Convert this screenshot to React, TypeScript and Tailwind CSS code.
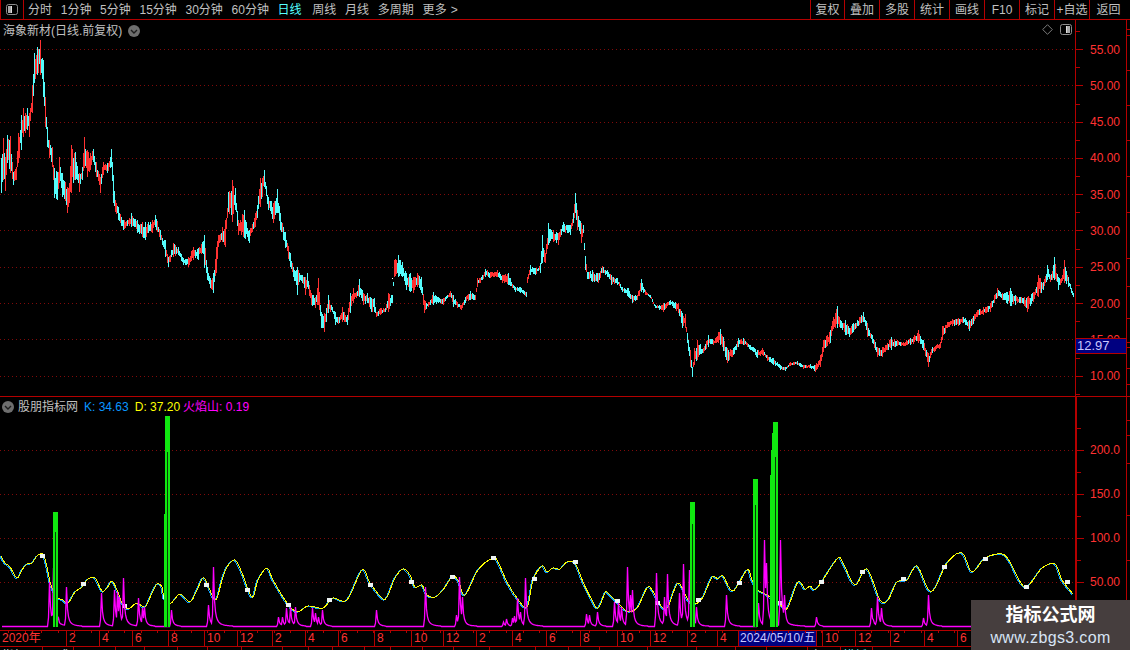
const TABS = ["分时", "1分钟", "5分钟", "15分钟", "30分钟", "60分钟", "日线", "周线", "月线", "多周期", "更多 >"];
const ACTIONS = ["复权", "叠加", "多股", "统计", "画线", "F10", "标记", "+自选", "返回"];
const PRICE_LABELS = ["55.00", "50.00", "45.00", "40.00", "35.00", "30.00", "25.00", "20.00", "15.00", "10.00"];
const PRICE_GRID = [49, 85, 122, 158, 194, 230, 267, 303, 339, 376];
const KD_LABELS = ["200.0", "150.0", "100.0", "50.00"];
const KD_GRID = [450, 494, 538, 582];

// x, high, low, traced off the picture in page pixels
const PRICE: [number, number, number][] = [
  [1,158,193],[3,138,180],[5,157,191],[7,135,163],[10,136,173],[13,172,185],[16,167,180],[18,133,163],[21,115,150],[23,108,137],
  [27,108,130],[29,113,137],[32,85,113],[34,53,83],[37,47,75],[40,40,75],[43,60,97],[45,97,127],[47,127,147],[49,140,158],
  [52,147,167],[54,168,198],[57,172,200],[59,157,183],[62,173,197],[67,187,213],[69,183,203],[71,145,193],[75,152,180],[79,173,192],
  [82,167,180],[84,137,168],[87,150,177],[90,153,170],[93,149,162],[96,162,177],[100,177,193],[103,162,175],[107,163,173],[111,149,167],
  [113,175,203],[115,200,212],[118,207,220],[123,220,230],[127,220,226],[131,213,227],[137,220,233],[142,222,237],[145,222,240],[148,222,233],
  [152,220,233],[155,215,227],[160,230,240],[165,240,257],[168,257,267],[173,243,257],[178,247,255],[183,258,265],[188,257,267],[193,247,260],
  [198,248,260],[202,242,253],[204,235,268],[207,267,280],[210,278,288],[213,273,293],[216,247,273],[218,235,247],[222,227,242],[225,220,247],
  [228,192,212],[232,180,222],[235,188,210],[238,220,235],[244,210,238],[249,230,243],[255,213,227],[260,178,207],[264,170,187],[268,197,210],
  [273,203,223],[277,189,213],[280,213,230],[285,232,248],[290,253,267],[293,267,277],[297,267,295],[299,273,282],[302,275,283],[305,277,295],
  [307,273,287],[311,293,305],[315,297,308],[318,278,305],[321,312,328],[324,313,332],[328,295,313],[332,307,312],[335,312,325],[338,317,324],
  [342,307,322],[347,315,325],[350,293,313],[353,288,303],[356,292,298],[359,279,297],[363,293,305],[367,293,303],[371,298,312],[374,298,312],
  [376,312,317],[380,308,315],[385,308,312],[388,293,312],[392,295,303],[394,260,277],[398,255,277],[402,262,277],[406,273,290],[410,273,292],
  [413,277,293],[417,273,287],[421,277,293],[424,300,313],[428,302,307],[433,292,305],[438,297,303],[443,298,305],[447,295,298],[450,291,297],
  [453,295,307],[457,302,308],[461,305,310],[465,297,303],[470,291,300],[475,295,300],[477,278,287],[482,275,280],[485,269,277],[490,272,278],
  [497,270,277],[502,275,283],[508,273,285],[515,287,292],[520,287,293],[526,292,297],[527,277,283],[530,265,275],[535,268,275],[540,263,273],
  [542,235,263],[545,253,263],[548,223,245],[553,230,242],[558,233,245],[563,222,232],[570,225,235],[573,213,223],[575,193,213],[577,210,230],
  [581,223,243],[583,225,233],[585,256,270],[587,272,279],[592,270,282],[598,273,283],[602,266,273],[607,270,277],[611,275,285],[617,278,285],
  [622,287,292],[628,288,297],[632,295,303],[637,295,300],[641,279,292],[645,290,295],[650,295,298],[655,305,308],[663,303,312],[670,300,305],
  [678,303,313],[682,313,328],[685,314,328],[687,333,343],[690,350,367],[692,367,377],[694,348,365],[697,340,360],[703,348,353],[708,335,347],
  [713,340,345],[720,329,345],[727,348,363],[732,350,357],[738,338,347],[743,338,345],[750,345,350],[757,350,358],[762,348,355],[767,355,361],
  [773,358,365],[780,365,370],[785,367,371],[790,362,366],[797,361,365],[803,365,369],[810,364,368],[815,365,372],[820,355,367],[823,340,352],
  [830,330,343],[833,317,329],[837,306,328],[840,320,328],[845,320,335],[849,328,337],[853,323,332],[859,317,325],[863,312,322],[867,323,337],
  [872,335,343],[877,347,357],[882,347,357],[887,343,350],[891,337,350],[897,340,346],[903,342,346],[910,338,345],[918,330,343],[923,340,350],
  [928,353,367],[932,347,353],[940,342,348],[942,326,340],[947,322,328],[952,319,326],[958,318,326],[963,317,323],[969,320,331],[977,310,317],
  [983,307,315],[990,303,312],[997,288,298],[1002,293,300],[1010,288,306],[1015,295,305],[1020,297,303],[1027,297,312],[1033,292,302],[1038,275,297],
  [1043,282,290],[1047,265,280],[1050,275,282],[1054,257,280],[1058,277,290],[1061,278,283],[1064,260,283],[1068,277,287],[1071,288,293],[1073,293,297],
];

const KD: [number, number][] = [
  [1,556],[5,563],[10,567],[17,578],[22,570],[27,564],[32,563],[37,556],[43,554],[47,567],[50,582],[53,590],[58,598],[63,600],[68,603],
  [75,592],[82,587],[88,579],[95,578],[102,591],[107,588],[112,581],[117,590],[122,603],[128,609],[137,603],[145,607],[152,593],[157,584],
  [162,587],[164,598],[171,603],[180,594],[190,602],[197,590],[204,578],[213,597],[217,598],[222,580],[227,567],[235,560],[242,573],[252,597],
  [258,580],[267,568],[273,580],[287,603],[297,612],[308,606],[323,608],[333,598],[347,600],[362,570],[370,583],[382,598],[387,597],[395,578],
  [403,569],[410,575],[415,587],[422,585],[427,595],[435,597],[443,590],[452,577],[458,580],[465,595],[478,570],[493,558],[498,562],[507,582],
  [517,598],[527,607],[533,580],[542,566],[547,572],[553,568],[560,569],[567,562],[575,563],[583,582],[592,600],[598,608],[605,593],[608,593],
  [617,602],[627,611],[637,608],[647,588],[652,590],[662,607],[668,607],[678,583],[688,600],[695,604],[703,597],[712,577],[718,579],[723,576],
  [733,591],[747,570],[752,580],[758,590],[767,595],[783,607],[788,607],[798,582],[805,589],[810,586],[817,588],[837,559],[843,563],[855,585],
  [867,569],[880,600],[888,600],[897,582],[907,580],[917,566],[928,589],[935,588],[947,563],[962,553],[972,572],[985,558],[1002,554],[1010,562],
  [1025,587],[1042,568],[1055,564],[1062,580],[1073,594],
];

const MARKS: [number, number][] = [
  [42,556],[83,584],[124,606],[165,597],[206,585],[247,590],[288,605],[329,600],[370,585],[411,582],[452,577],[493,558],[534,579],[575,562],
  [617,601],[657,603],[698,600],[739,583],[780,603],[821,582],[862,572],[903,579],[944,567],[985,559],[1026,587],[1067,582],
];

// x, top of each 火焰山 spike
const SPIKES: [number, number][] = [
  [49,582],[53,568],[58,618],[66,587],[101,593],[114,590],[117,592],[119,597],[123,578],[138,598],[142,608],[144,607],[171,610],[208,605],[213,567],
  [278,617],[282,617],[286,608],[290,607],[295,607],[312,608],[315,613],[318,617],[322,610],[376,610],[425,587],[456,615],[459,577],[462,597],
  [503,622],[506,619],[512,618],[514,616],[517,598],[520,612],[525,578],[586,614],[589,615],[597,612],[614,602],[618,603],[621,607],[627,567],[630,595],[632,590],
  [656,573],[664,597],[667,574],[679,593],[683,564],[689,570],[696,607],[726,595],[758,603],[764,540],[766,563],[780,540],[784,595],[816,617],
  [871,608],[873,620],[877,597],[881,608],[923,618],[928,595],
];

// x, width, top of the green columns
const VOLUME: [number, number, number][] = [
  [53,5,512],[164,1,514],[165,5,416],[690,5,502],[753,5,479],[770,1,475],[771,1,450],[772,1,433],[773,5,422],
];
const SLITS: [number, number][] = [[55,532],[167,452],[692,524],[755,505],[775,457]];

const AXIS_CELLS: [number, string][] = [
  [0,"2020年"],[66,"2"],[99,"4"],[132,"6"],[168,"8"],[204,"10"],[237,"12"],[272,"2"],[305,"4"],[338,"6"],[374,"8"],[411,"10"],[443,"12"],[476,"2"],
  [512,"4"],[546,"6"],[580,"8"],[617,"10"],[650,"12"],[687,"2"],[717,"4"],[738,"2024/05/10/五"],[816,""],[822,"10"],[855,"12"],[890,"2"],[924,"4"],[957,"6"],[1130,""],
];
const STRIP_CELLS: [number, string][] = [
  [0,"指标"],[42,"公式"],[73,""],[115,""],[144,""],[177,""],[207,""],[241,""],[282,""],[308,""],[332,""],[364,""],[390,""],[422,""],[453,""],[489,""],[535,""],
  [568,""],[599,""],[647,""],[696,""],[735,""],[766,""],[807,"窗口"],[840,"模板"],[872,""],[1130,""],
];

function buildCandles() {
  let seed = 11;
  const rnd = () => {
    seed = (seed * 16807) % 2147483647;
    return seed / 2147483647;
  };
  let red = "";
  let cyan = "";
  let i = 0;
  for (let x = 1; x <= 1073; x++) {
    while (i < PRICE.length - 2 && PRICE[i + 1][0] <= x) i++;
    const [x0, h0, l0] = PRICE[i];
    const [x1, h1, l1] = PRICE[i + 1];
    const t = (x - x0) / (x1 - x0);
    const hi = h0 + (h1 - h0) * t;
    const lo = l0 + (l1 - l0) * t;
    const exact = x === x0 || x === x1;
    const span = lo - hi;
    const top = Math.round(exact ? hi : hi + rnd() * span * 0.35);
    const bot = Math.round(exact ? lo : lo - rnd() * span * 0.35);
    const falling = h1 + l1 - h0 - l0 > 0;
    const seg = `M${x + 0.5} ${top}V${Math.max(bot, top + 2)}`;
    if (rnd() < (falling ? 0.72 : 0.3)) cyan += seg;
    else red += seg;
  }
  return { red, cyan };
}

function buildFlame() {
  let d = "M2 626.5";
  for (let x = 3; x <= 1073; x++) {
    let h = 0;
    for (const [sx, top] of SPIKES) {
      const dist = x - sx;
      const full = 626.5 - top;
      if (dist === -1) h = Math.max(h, full * 0.2);
      if (dist >= 0) h = Math.max(h, full / (1 + 0.5 * dist) ** 2);
    }
    d += `L${x + 0.5} ${(626.5 - (h < 0.5 ? 0 : h)).toFixed(1)}`;
  }
  return d;
}

// Catmull-Rom through the traced points, the line in the picture is a smooth one
function smoothLine(points: [number, number][], dx: number, dy: number) {
  let d = `M${points[0][0] + dx} ${points[0][1] + dy}`;
  for (let i = 0; i < points.length - 1; i++) {
    const p0 = points[Math.max(i - 1, 0)];
    const p1 = points[i];
    const p2 = points[i + 1];
    const p3 = points[Math.min(i + 2, points.length - 1)];
    const c1x = p1[0] + (p2[0] - p0[0]) / 6 + dx;
    const c1y = p1[1] + (p2[1] - p0[1]) / 6 + dy;
    const c2x = p2[0] - (p3[0] - p1[0]) / 6 + dx;
    const c2y = p2[1] - (p3[1] - p1[1]) / 6 + dy;
    d += `C${c1x.toFixed(1)} ${c1y.toFixed(1)} ${c2x.toFixed(1)} ${c2y.toFixed(1)} ${p2[0] + dx} ${p2[1] + dy}`;
  }
  return d;
}

const candles = buildCandles();
const flame = buildFlame();
const kdYellow = smoothLine(KD, 0, 0);
const kdBlue = smoothLine(KD, -1, 0.6);

function Grid({ rows }: { rows: number[] }) {
  return (
    <>
      {rows.map((y) => (
        <line key={y} x1="0" x2="1075" y1={y + 0.5} y2={y + 0.5} stroke="#800a0a" strokeDasharray="1 3" shapeRendering="auto" />
      ))}
    </>
  );
}

function RoundIcon() {
  return (
    <svg width="12" height="12" viewBox="0 0 12 12" className="shrink-0">
      <circle cx="6" cy="6" r="6" fill="#6e6e6e" />
      <path d="M3 5l3 3 3-3" fill="none" stroke="#1c1c1c" strokeWidth="1.4" />
    </svg>
  );
}

function PanelIcon({ side }: { side: "left" | "right" }) {
  return (
    <svg width="12" height="11" viewBox="0 0 12 11" className="shrink-0">
      <rect x="0.5" y="0.5" width="11" height="10" rx="2" fill="#000" stroke="#8c8c8c" />
      <rect x={side === "left" ? 2 : 7} y="2" width="3" height="7" fill="#a8a8a8" />
      <rect x={side === "left" ? 5 : 6} y="2" width="1" height="7" fill="#dcdcdc" />
    </svg>
  );
}

function AxisTicks({ rows, height, top }: { rows: number[]; height: number; top: number }) {
  const step = rows[1] - rows[0];
  const minors = rows.map((y) => y - step / 2);
  minors.push(rows[rows.length - 1] + step / 2);
  return (
    <svg className="absolute inset-0" width="51" height={height} viewBox={`1075 ${top} 51 ${height}`} shapeRendering="crispEdges">
      {rows.map((y) => (
        <line key={y} x1="1075" x2="1082" y1={y + 0.5} y2={y + 0.5} stroke="#b40000" />
      ))}
      {minors.map((y) => (
        <line key={y} x1="1075" x2="1079" y1={Math.round(y) + 0.5} y2={Math.round(y) + 0.5} stroke="#b40000" />
      ))}
    </svg>
  );
}

function Gutter({ ticks, height, top }: { ticks: number[]; height: number; top: number }) {
  return (
    <div className="w-[4px] shrink-0 border-l border-[#b40000]">
      <svg width="3" height={height} viewBox={`1127 ${top} 3 ${height}`} shapeRendering="crispEdges" className="block">
        {ticks.map((y) => (
          <line key={y} x1="1127" x2="1130" y1={y + 0.5} y2={y + 0.5} stroke="#b40000" />
        ))}
      </svg>
    </div>
  );
}

function Cells({ cells, labelled }: { cells: [number, string][]; labelled: (text: string) => string }) {
  return (
    <>
      {cells.slice(0, -1).map(([x, text], i) => (
        <div
          key={x}
          className={`shrink-0 overflow-hidden whitespace-nowrap pl-[2px] ${i > 0 ? "border-l border-[#b40000]" : ""} ${labelled(text)}`}
          style={{ width: cells[i + 1][0] - x }}
        >
          {text}
        </div>
      ))}
    </>
  );
}

export default function App() {
  return (
    <div className="flex h-[650px] w-[1130px] flex-col overflow-hidden bg-black text-[12px] relative text-[#c0c0c0] font-['Liberation_Sans','Noto_Sans_CJK_SC',sans-serif]">
      {/* toolbar */}
      <div className="flex h-[20px] shrink-0 items-center border-b border-[#b40000]">
        <div className="flex h-full w-[24px] shrink-0 items-center justify-center border-x border-[#b40000]">
          <PanelIcon side="left" />
        </div>
        <div className="flex items-center gap-[8.7px] pl-[4px]">
          {TABS.map((t) => (
            <span
              key={t}
              className={`whitespace-nowrap ${t === "日线" ? "text-[#55ffff]" : ""} ${t === "周线" ? "ml-[2px]" : ""} ${t === "更多 >" ? "tracking-[0.3px]" : ""}`}
            >
              {t}
            </span>
          ))}
        </div>
        <div className="ml-auto flex h-full pr-[3px]">
          {ACTIONS.map((a, i) => (
            <div
              key={a}
              className={`flex h-full items-center justify-center whitespace-nowrap border-l border-[#b40000] ${i === 0 ? "w-[34px]" : i === 8 ? "w-[38px]" : "w-[35px]"}`}
            >
              {a}
            </div>
          ))}
        </div>
      </div>

      {/* price pane */}
      <div className="flex h-[377px] shrink-0 border-b border-[#b40000]">
        <div className="relative w-[1075px] shrink-0">
          <svg width="1075" height="376" viewBox="0 20 1075 376" shapeRendering="crispEdges" className="block">
            <Grid rows={PRICE_GRID} />
            <path d={candles.red} stroke="#ff3232" fill="none" />
            <path d={candles.cyan} stroke="#54fcfc" fill="none" />
            <rect x="392" y="278" width="1" height="1" fill="#fff" />
            <rect x="584" y="249" width="1" height="1" fill="#fff" />
          </svg>
          <div className="absolute left-[3px] top-[2px] flex items-center gap-[6px]">
            <span className="whitespace-nowrap">海象新材(日线.前复权)</span>
            <RoundIcon />
          </div>
          <div className="absolute right-[3px] top-[4px] flex items-center gap-[7px]">
            <svg width="11" height="11" viewBox="0 0 11 11">
              <path d="M5.5 .7L10.3 5.5 5.5 10.3 .7 5.5z" fill="none" stroke="#7c7c7c" />
            </svg>
            <PanelIcon side="right" />
          </div>
        </div>
        <div className="relative w-[51px] shrink-0 border-l border-[#b40000] pt-[11.4px] text-[#ff3232]">
          <AxisTicks rows={PRICE_GRID} height={376} top={20} />
          {PRICE_LABELS.map((p) => (
            <div key={p} className="flex h-[36.3px] items-center pl-[14px]">
              {p}
            </div>
          ))}
          <div className="absolute inset-x-0 top-[318px] flex h-[16px] items-center border-y border-[#b40000] bg-[#000080] pl-[1px] text-[13px] text-[#c8c8ff]">
            12.97
          </div>
        </div>
        <Gutter ticks={[29, 35, 70, 105, 140, 176, 212, 258, 286, 318, 342, 347, 368, 384]} height={376} top={20} />
      </div>

      {/* indicator pane */}
      <div className="flex h-[233px] shrink-0">
        <div className="relative w-[1075px] shrink-0">
          <svg width="1075" height="233" viewBox="0 397 1075 233" shapeRendering="crispEdges" className="block">
            <Grid rows={KD_GRID} />
            <path d={kdBlue} fill="none" stroke="#0a9cf5" />
            <path d={kdYellow} fill="none" stroke="#ffff00" />
            {MARKS.map(([x, y]) => (
              <rect key={x} x={x - 2} y={y - 2} width="5" height="4" fill="#eef4f4" />
            ))}
            <path d={flame} fill="none" stroke="#ff00ff" strokeWidth="1.3" shapeRendering="auto" />
            {VOLUME.map(([x, w, top]) => (
              <rect key={x} x={x} y={top} width={w} height={627 - top} fill="#10e810" />
            ))}
            {SLITS.map(([x, top]) => (
              <rect key={x} x={x} y={top} width="1" height={627 - top} fill="#063a06" />
            ))}
          </svg>
          <div className="absolute left-[2px] top-[1px] flex items-center whitespace-nowrap">
            <RoundIcon />
            <span className="ml-[4px]">股朋指标网</span>
            <span className="ml-[6px] text-[#0a96ff]">K: 34.63</span>
            <span className="ml-[6px] text-[#ffff00]">D: 37.20</span>
            <span className="ml-[3px] text-[#ff00ff]">火焰山: 0.19</span>
          </div>
        </div>
        <div className="relative w-[51px] shrink-0 border-l-2 border-[#b40000] pt-[30.5px] text-[#ff3232]">
          <AxisTicks rows={KD_GRID} height={233} top={397} />
          {KD_LABELS.map((p) => (
            <div key={p} className="flex h-[44px] items-center pl-[13px]">
              {p}
            </div>
          ))}
        </div>
        <Gutter ticks={[420, 435, 463, 515, 560, 600]} height={233} top={397} />
      </div>

      {/* time axis */}
      <div className="relative flex h-[17px] shrink-0 items-stretch border-y border-[#b40000] leading-[15px] text-[#ff3232]">
        <Cells cells={AXIS_CELLS} labelled={(t) => (t.startsWith("2024") ? "bg-[#000080] !text-[#c8c8ff] !pl-[1px]" : "")} />
        <svg className="absolute inset-0" width="1130" height="4" shapeRendering="crispEdges">
          <path d={Array.from({ length: 58 }, (_, i) => `M${Math.round(8 + i * 16.6) + 0.5} 0V2`).join("")} stroke="#b40000" />
        </svg>
      </div>

      {/* tab strip, cut off by the window */}
      <div className="flex h-[3px] shrink-0 leading-[19px] text-[#d8d8d8]">
        <Cells cells={STRIP_CELLS} labelled={(t) => (t === "模板" ? "text-[#55ffff]" : "")} />
      </div>

      {/* site watermark */}
      <div className="absolute bottom-0 right-0 flex h-[50px] w-[159px] flex-col items-center bg-[#463e3e]">
        <span className="mt-[2px] text-[18px] font-bold leading-[26px] text-white">指标公式网</span>
        <span className="text-[16px] leading-[20px] tracking-[0.35px] text-[#d7e4f5]">www.zbgs3.com</span>
      </div>
    </div>
  );
}
